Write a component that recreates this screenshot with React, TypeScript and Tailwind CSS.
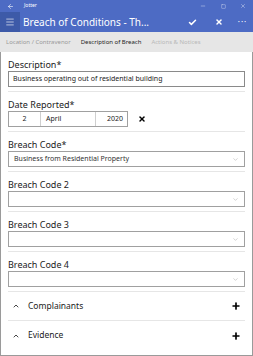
import { Check, X, ChevronDown, ChevronUp, Plus, ArrowLeft, Minus, Square, Menu } from "lucide-react";

const font = { fontFamily: '"Noto Sans", "Open Sans", sans-serif' };

const Label = ({ text }: { text: string }) => (
  <div className="h-[12px] leading-[12px] text-[9px] text-[#222]">{text}</div>
);

const Select = ({ value }: { value?: string }) => (
  <div className="h-[16px] border border-[#a0a0a0] bg-white flex items-center pl-[5px] pr-[5px]">
    <span className="flex-1 text-[7px] text-[#333] truncate">{value ?? ""}</span>
    <ChevronDown size={7} strokeWidth={1.5} className="text-[#999]" />
  </div>
);

const Group = ({ label, children }: { label: string; children: React.ReactNode }) => (
  <div className="pt-[7px] pb-[4px] border-b border-[#e6e6e6]">
    <Label text={label} />
    {children}
  </div>
);

const Collapsible = ({ title, border }: { title: string; border?: boolean }) => (
  <div className={`h-[29px] flex items-center pl-[4px] pr-[4px] ${border ? "border-b border-[#e6e6e6]" : ""}`}>
    <ChevronUp size={8} strokeWidth={2.5} className="text-[#222]" />
    <span className="ml-[8px] flex-1 text-[8.5px] text-[#222]">{title}</span>
    <Plus size={10} strokeWidth={4} className="text-black" />
  </div>
);

export default function App() {
  return (
    <div className="w-[253px] h-[356px] bg-white flex flex-col overflow-hidden" style={font}>
      <div className="h-[12px] bg-[#4d6bc4] flex items-center text-white">
        <ArrowLeft size={7} strokeWidth={2} className="ml-[7px]" />
        <span className="ml-[10px] text-[5px]">Jotter</span>
        <div className="flex-1" />
        <Minus size={6} strokeWidth={1.5} className="mr-[15px]" />
        <Square size={5} strokeWidth={1.5} className="mr-[14px]" />
        <X size={6} strokeWidth={1.5} className="mr-[7px]" />
      </div>
      <div className="h-[20px] bg-[#4d6bc4] flex items-center text-white">
        <div className="w-[20px] h-[20px] bg-[#3d5aa8] flex items-center justify-center">
          <Menu size={10} strokeWidth={1.5} />
        </div>
        <span className="ml-[3px] text-[10px] leading-[20px] whitespace-nowrap">Breach of Conditions - Th...</span>
        <div className="flex-1" />
        <div className="w-[28px] flex justify-center">
          <Check size={9} strokeWidth={4} />
        </div>
        <div className="w-[26px] flex justify-center">
          <X size={8} strokeWidth={4.5} />
        </div>
        <div className="w-[21px] flex justify-center text-[8px] tracking-[1px] leading-none">···</div>
      </div>
      <div className="h-[20px] bg-[#e6e6e6] flex items-center text-[6px] pl-[6px] gap-[10px] whitespace-nowrap">
        <span className="text-[#9a9a9a]">Location / Contravenor</span>
        <span className="text-[#222]">Description of Breach</span>
        <span className="text-[#b8b8b8]">Actions &amp; Notices</span>
      </div>
      <div className="flex-1 border-x border-b border-[#9a9a9a] px-[7px] flex flex-col">
        <Group label="Description*">
          <div className="h-[16px] border border-[#8a8a8a] flex items-center px-[4px] text-[7px] text-[#222]">
            Business operating out of residential building
          </div>
        </Group>
        <Group label="Date Reported*">
          <div className="flex items-center">
            <div className="h-[16px] w-[120px] border border-[#a0a0a0] flex text-[7px] text-[#222]">
              <div className="w-[32px] flex items-center justify-center border-r border-[#cfcfcf]">2</div>
              <div className="w-[55px] flex items-center pl-[5px] border-r border-[#cfcfcf]">April</div>
              <div className="flex-1 flex items-center justify-end pr-[4px]">2020</div>
            </div>
            <X size={8} strokeWidth={4.5} className="ml-[10px] text-black" />
          </div>
        </Group>
        <Group label="Breach Code*">
          <Select value="Business from Residential Property" />
        </Group>
        <Group label="Breach Code 2">
          <Select />
        </Group>
        <Group label="Breach Code 3">
          <Select />
        </Group>
        <Group label="Breach Code 4">
          <Select />
        </Group>
        <Collapsible title="Complainants" border />
        <Collapsible title="Evidence" />
      </div>
    </div>
  );
}
